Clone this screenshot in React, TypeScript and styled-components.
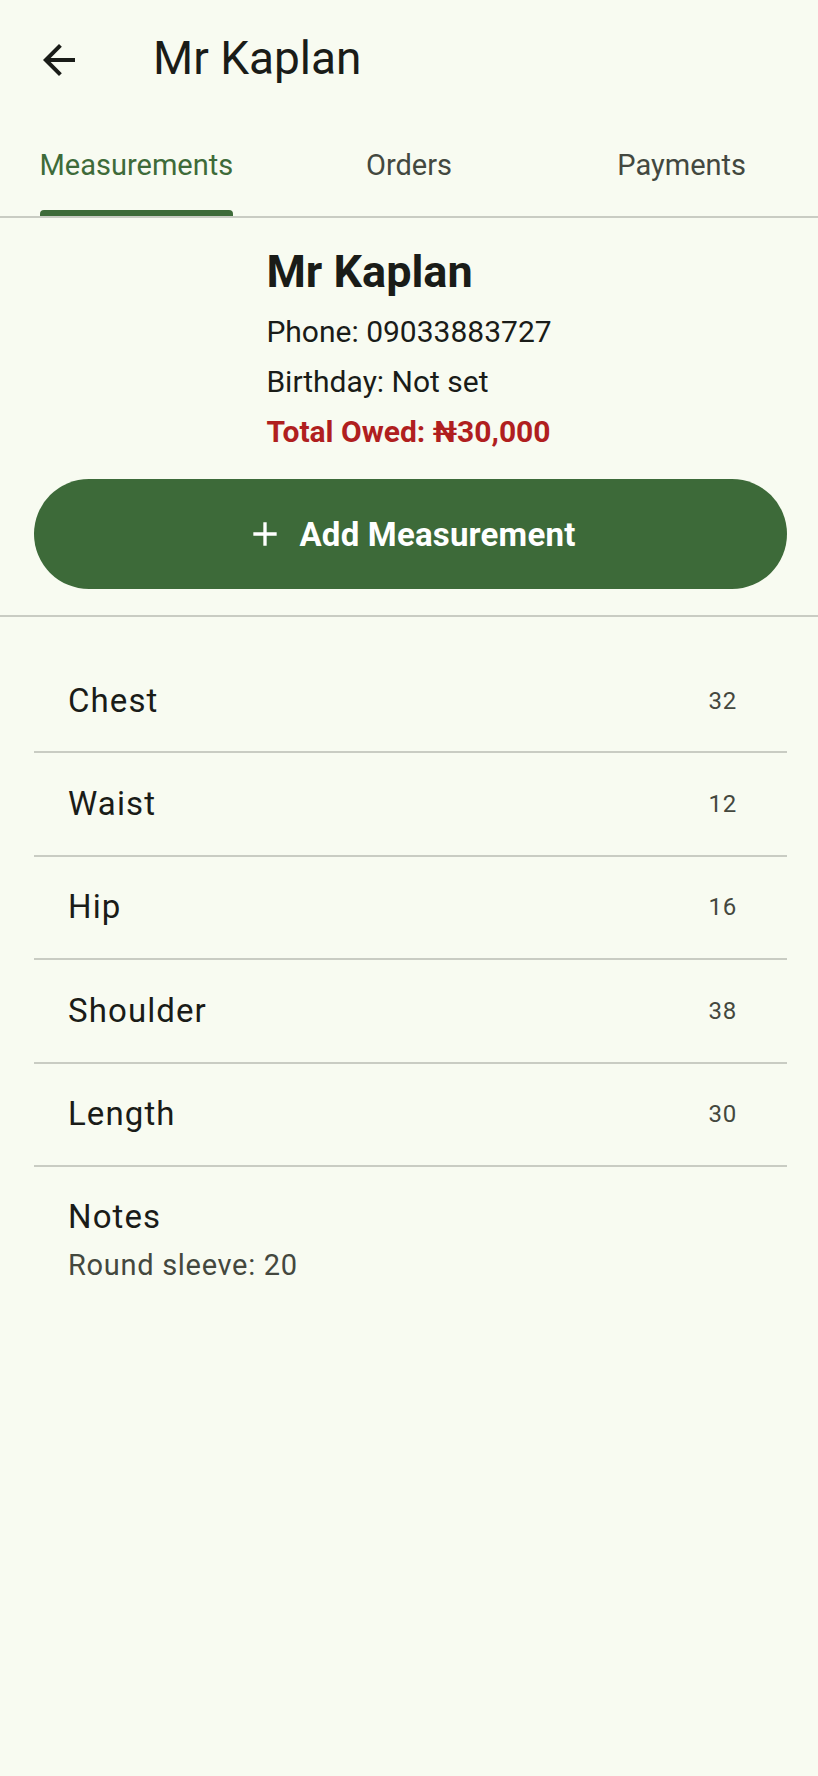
import styled, { createGlobalStyle } from 'styled-components';

const measurements = [
    { name: 'Chest', value: 32 },
    { name: 'Waist', value: 12 },
    { name: 'Hip', value: 16 },
    { name: 'Shoulder', value: 38 },
    { name: 'Length', value: 30 },
];

const tabs = ['Measurements', 'Orders', 'Payments'];

export default function App() {
    return (
        <Page>
            <GlobalStyle />
            <AppBar>
                <IconButton aria-label="Back">
                    <svg width="48" height="48" viewBox="0 0 24 24" fill="#1a1c18">
                        <path d="M20 11H7.83l5.59-5.59L12 4l-8 8 8 8 1.41-1.41L7.83 13H20v-2z" />
                    </svg>
                </IconButton>
                <AppBarTitle>Mr Kaplan</AppBarTitle>
            </AppBar>

            <TabBar>
                {tabs.map((t, i) => (
                    <Tab key={t}>
                        <TabInner>
                            <TabLabel $active={i === 0}>{t}</TabLabel>
                            <Indicator $active={i === 0} />
                        </TabInner>
                    </Tab>
                ))}
            </TabBar>

            <InfoWrapper>
                <Info>
                    <ClientName>Mr Kaplan</ClientName>
                    <InfoLine>Phone: 09033883727</InfoLine>
                    <InfoLine>Birthday: Not set</InfoLine>
                    <InfoLine $owed>Total Owed: ₦30,000</InfoLine>
                </Info>
            </InfoWrapper>

            <ButtonWrap>
                <AddButton>
                    <svg width="40" height="40" viewBox="0 0 24 24" fill="#ffffff">
                        <path d="M19 13h-6v6h-2v-6H5v-2h6V5h2v6h6v2z" />
                    </svg>
                    <span>Add Measurement</span>
                </AddButton>
            </ButtonWrap>

            <Divider />

            <List>
                {measurements.map((m) => (
                    <Row key={m.name}>
                        <RowLabel>{m.name}</RowLabel>
                        <RowValue>{m.value}</RowValue>
                    </Row>
                ))}
                <Notes>
                    <RowLabel>Notes</RowLabel>
                    <NotesText>Round sleeve: 20</NotesText>
                </Notes>
            </List>
        </Page>
    );
}

const GlobalStyle = createGlobalStyle`
html, body {
    margin: 0;
    padding: 0;
    background: #f8fbf1;
}
body {
    font-family: Roboto, "Noto Sans", sans-serif;
    color: #1a1c18;
}
`;

const Page = styled.div`
width: 818px;
min-height: 1776px;
background: #f8fbf1;
`;

const AppBar = styled.header`
height: 120px;
display: flex;
align-items: center;
padding-left: 35px;
`;

const IconButton = styled.button`
width: 48px;
height: 48px;
padding: 0;
border: none;
background: transparent;
display: flex;
align-items: center;
justify-content: center;
`;

const AppBarTitle = styled.h1`
margin: -4px 0 0 70px;
font-size: 46px;
font-weight: 400;
color: #1a1c18;
`;

const TabBar = styled.nav`
display: flex;
height: 96px;
border-bottom: 2px solid #c9ccc3;
`;

const Tab = styled.div`
flex: 1;
display: flex;
justify-content: center;
`;

const TabInner = styled.div`
display: flex;
flex-direction: column;
`;

const TabLabel = styled.span<{ $active?: boolean }>`
flex: 1;
display: flex;
align-items: center;
justify-content: center;
font-size: 29px;
color: ${(p) => (p.$active ? '#3e6b39' : '#43483f')};
`;

const Indicator = styled.div<{ $active?: boolean }>`
height: 6px;
border-radius: 4px 4px 0 0;
background: ${(p) => (p.$active ? '#3e6b39' : 'transparent')};
`;

const InfoWrapper = styled.section`
display: flex;
justify-content: center;
padding-top: 24px;
`;

const Info = styled.div`
display: flex;
flex-direction: column;
`;

const ClientName = styled.h2`
margin: 0 0 5px;
font-size: 45px;
line-height: 60px;
font-weight: 700;
color: #1a1c18;
`;

const InfoLine = styled.div<{ $owed?: boolean }>`
font-size: 30px;
line-height: 50px;
font-weight: ${(p) => (p.$owed ? 700 : 400)};
color: ${(p) => (p.$owed ? '#b01f1f' : '#1a1c18')};
`;

const ButtonWrap = styled.div`
padding: 22px 31px 26px 34px;
`;

const AddButton = styled.button`
width: 100%;
height: 110px;
border: none;
border-radius: 55px;
background: #3d6a39;
color: #ffffff;
display: flex;
align-items: center;
justify-content: center;
gap: 14px;
font-family: Roboto, sans-serif;
font-size: 33px;
font-weight: 700;
letter-spacing: 0.2px;
`;

const Divider = styled.hr`
margin: 0;
border: none;
height: 2px;
background: #c9ccc3;
`;

const List = styled.div`
padding: 33px 31px 0 34px;
`;

const Row = styled.div`
height: 101.4px;
display: flex;
align-items: center;
justify-content: space-between;
padding: 0 50px 0 34px;
border-bottom: 2px solid #c9ccc3;
`;

const RowLabel = styled.span`
font-size: 33px;
letter-spacing: 1.1px;
color: #1a1c18;
line-height: 48px;
`;

const RowValue = styled.span`
font-size: 24px;
letter-spacing: 0.8px;
color: #44483e;
`;

const Notes = styled.div`
display: flex;
flex-direction: column;
padding: 26px 34px 0;
`;

const NotesText = styled.span`
font-size: 29px;
letter-spacing: 0.7px;
line-height: 48px;
color: #44483e;
`;
